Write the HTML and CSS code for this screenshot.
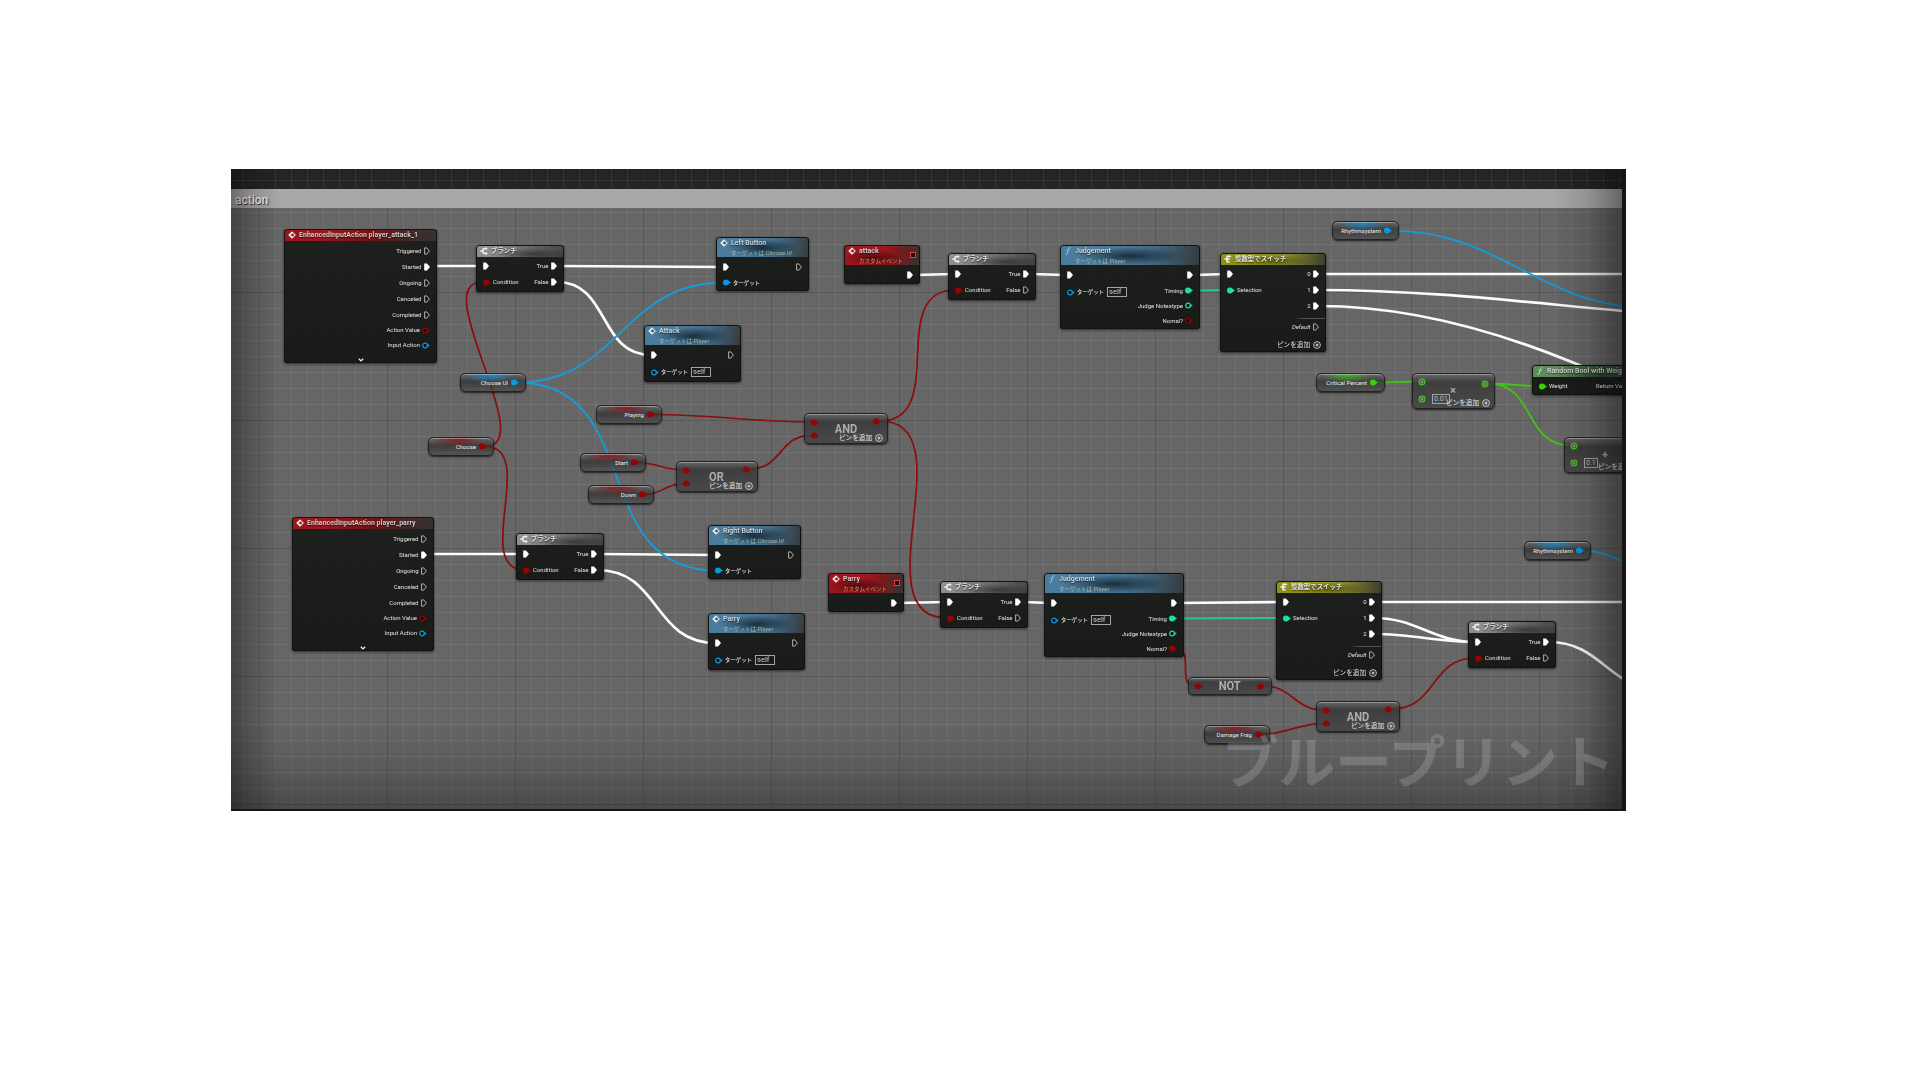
FILE: index.html
```html
<!DOCTYPE html>
<html lang="ja">
<head>
<meta charset="utf-8">
<title>Blueprint graph</title>
<link rel="stylesheet" href="styles.css">
</head>
<body>
<svg class="defs" aria-hidden="true">
  <symbol id="exec-on" viewBox="0 0 6 8"><path d="M.2 .5H3L6 4 3 7.5H.2z" fill="#fff"/></symbol>
  <symbol id="exec-off" viewBox="0 0 6 8"><path d="M.6 .9H2.8L5.4 4 2.8 7.1H.6z" fill="none" stroke="#d4d4d4" stroke-width=".8"/></symbol>
  <symbol id="data-on" viewBox="0 0 8 7"><circle cx="3" cy="3.5" r="3" fill="currentColor"/><path d="M5 1.6L8 3.5 5 5.4z" fill="currentColor"/></symbol>
  <symbol id="data-off" viewBox="0 0 8 7"><circle cx="3" cy="3.5" r="2.3" fill="#0b0d0c" stroke="currentColor" stroke-width="1.3"/><path d="M5.6 2L7.8 3.5 5.6 5z" fill="currentColor"/></symbol>
  <symbol id="wild" viewBox="0 0 8 8"><circle cx="4" cy="4" r="2.9" fill="#8a8a8a" stroke="currentColor" stroke-width="1.1"/><circle cx="4" cy="4" r="1.9" fill="none" stroke="#3a4a35" stroke-width=".7"/></symbol>
  <symbol id="i-event" viewBox="0 0 8 8"><path d="M4 .2L7.8 4 4 7.8 .2 4z" fill="#f0f0f0"/><path d="M4.4 2L6.4 4 4.4 6V4.8H2.8V3.2h1.6z" fill="currentColor"/></symbol>
  <symbol id="i-branch" viewBox="0 0 8 8"><path d="M.4 4H3M6.2 1.6H4.6Q3 1.6 3 3v2Q3 6.4 4.6 6.4H6.2" fill="none" stroke="#f2f2f2" stroke-width="1.5"/><path d="M5.6 0L7.8 1.6 5.6 3.2zM5.6 4.8L7.8 6.4 5.6 8z" fill="#f2f2f2"/></symbol>
  <symbol id="i-switch" viewBox="0 0 8 8"><path d="M.4 4H5M5.4 1.3H3V6.8H5.4" fill="none" stroke="#f2f2f2" stroke-width="1.4"/><path d="M5 0L7.6 1.4 5 2.8zM4.6 2.9L6.4 4 4.6 5.1z" fill="#f2f2f2"/></symbol>
  <symbol id="i-func" viewBox="0 0 8 8"><path d="M6.6 .9Q4.9 .2 4.4 2.2L3.4 6Q3 7.8 1.4 7.1M2.6 3.2H5.8" fill="none" stroke="currentColor" stroke-width="1.1"/></symbol>
  <symbol id="i-add" viewBox="0 0 8 8"><circle cx="4" cy="4" r="3.4" fill="none" stroke="#d8d8d8" stroke-width=".9"/><path d="M4 2.4V5.6M2.4 4H5.6" stroke="#d8d8d8" stroke-width="1.2"/></symbol>
  <symbol id="i-down" viewBox="0 0 6 4"><path d="M.8 .7L3 2.9 5.2 .7" fill="none" stroke="#eee" stroke-width="1.3"/></symbol>
</svg>

<main class="graph">
  <div class="comment">
    <h1 class="comment-title">action</h1>
    <div class="comment-body"></div>
  </div>
  <div class="grid"></div>

  <svg class="wires" viewBox="231 169 1391 640">
    <g class="w-exec">
      <path d="M430 266H482M557 266L725 267M430 554H522M597 554L716 555M913 275L955 274M897 603L947 602M1030 274L1067 275M1022 602L1051 603M1193 275L1227 274M1177 603L1283 602M1319 274H1626M1375 602H1626"/>
      <path d="M557 282C610 282 598 355 651 355M597 570C661 570 652 643 716 643"/>
      <path d="M1319 290C1489 290 1630 320 1800 320M1319 306C1400 306 1500 327 1622 384"/>
      <path d="M1375 618C1416 618 1434 642 1475 642M1375 634C1411 634 1439 642 1475 642M1549 642C1602 642 1609 690 1662 690"/>
    </g>
    <g class="w-bool">
      <path d="M485 446.500C540 446.500 427 282 482 282M485 446.500C539 446.500 471 570 525 570"/>
      <path d="M653 414.500C708 414.500 756 422 811 422M637 462.500C655 462.500 665 470 683 470M645 494.500C661 494.500 667 483.300 683 483.300M750 469C782 469 779 435.300 811 435.300"/>
      <path d="M880 421C949 421 886 290 955 290M880 421C968 421 859 618 947 618"/>
      <path d="M1176 648.500C1195 648.500 1176 686 1195 686M1264 686C1292 686 1295 710 1323 710M1261 734.500C1285 734.500 1299 723.300 1323 723.300M1392 709C1437 709 1430 658 1475 658"/>
    </g>
    <g class="w-object">
      <path d="M517 382.500C619 382.500 622 282.500 724 282.500M517 382.500C646 382.500 587 570.500 716 570.500M1390 230.600C1503 230.600 1539 308 1652 308M1582 550.600C1600 550.600 1610 556 1622 561"/>
    </g>
    <g class="w-enum"><path d="M1192 290.700L1227 290M1176 618.600L1283 618"/></g>
    <g class="w-float"><path d="M1376 382.700L1419 381.500M1488 383.500C1505 383.500 1521 386 1538 386M1488 383.500C1536 383.500 1523 445.500 1571 445.500"/></g>
  </svg>

  <section class="node eia-attack">
    <header class="head red"><svg class="icon"><use href="#i-event"/></svg><h2 class="title">EnhancedInputAction player_attack_1</h2></header>
    <div class="body"><ul class="outs">
      <li>Triggered<svg class="exec"><use href="#exec-off"/></svg></li>
      <li>Started<svg class="exec"><use href="#exec-on"/></svg></li>
      <li>Ongoing<svg class="exec"><use href="#exec-off"/></svg></li>
      <li>Canceled<svg class="exec"><use href="#exec-off"/></svg></li>
      <li>Completed<svg class="exec"><use href="#exec-off"/></svg></li>
      <li class="r15">Action Value<svg class="data bool"><use href="#data-off"/></svg></li>
      <li class="r15">Input Action<svg class="data object"><use href="#data-off"/></svg></li>
    </ul></div>
    <svg class="expand"><use href="#i-down"/></svg>
  </section>

  <section class="node eia-parry">
    <header class="head red"><svg class="icon"><use href="#i-event"/></svg><h2 class="title">EnhancedInputAction player_parry</h2></header>
    <div class="body"><ul class="outs">
      <li>Triggered<svg class="exec"><use href="#exec-off"/></svg></li>
      <li>Started<svg class="exec"><use href="#exec-on"/></svg></li>
      <li>Ongoing<svg class="exec"><use href="#exec-off"/></svg></li>
      <li>Canceled<svg class="exec"><use href="#exec-off"/></svg></li>
      <li>Completed<svg class="exec"><use href="#exec-off"/></svg></li>
      <li class="r15">Action Value<svg class="data bool"><use href="#data-off"/></svg></li>
      <li class="r15">Input Action<svg class="data object"><use href="#data-off"/></svg></li>
    </ul></div>
    <svg class="expand"><use href="#i-down"/></svg>
  </section>

  <section class="node branch branch-a">
    <header class="head gray"><svg class="icon"><use href="#i-branch"/></svg><h2 class="title jp">ブランチ</h2></header>
    <div class="body">
      <ul class="ins"><li><svg class="exec"><use href="#exec-on"/></svg></li><li><svg class="data bool"><use href="#data-on"/></svg>Condition</li></ul>
      <ul class="outs"><li>True<svg class="exec"><use href="#exec-on"/></svg></li><li>False<svg class="exec"><use href="#exec-on"/></svg></li></ul>
    </div>
  </section>
  <section class="node branch branch-b">
    <header class="head gray"><svg class="icon"><use href="#i-branch"/></svg><h2 class="title jp">ブランチ</h2></header>
    <div class="body">
      <ul class="ins"><li><svg class="exec"><use href="#exec-on"/></svg></li><li><svg class="data bool"><use href="#data-on"/></svg>Condition</li></ul>
      <ul class="outs"><li>True<svg class="exec"><use href="#exec-on"/></svg></li><li>False<svg class="exec"><use href="#exec-off"/></svg></li></ul>
    </div>
  </section>
  <section class="node branch branch-c">
    <header class="head gray"><svg class="icon"><use href="#i-branch"/></svg><h2 class="title jp">ブランチ</h2></header>
    <div class="body">
      <ul class="ins"><li><svg class="exec"><use href="#exec-on"/></svg></li><li><svg class="data bool"><use href="#data-on"/></svg>Condition</li></ul>
      <ul class="outs"><li>True<svg class="exec"><use href="#exec-on"/></svg></li><li>False<svg class="exec"><use href="#exec-on"/></svg></li></ul>
    </div>
  </section>
  <section class="node branch branch-d">
    <header class="head gray"><svg class="icon"><use href="#i-branch"/></svg><h2 class="title jp">ブランチ</h2></header>
    <div class="body">
      <ul class="ins"><li><svg class="exec"><use href="#exec-on"/></svg></li><li><svg class="data bool"><use href="#data-on"/></svg>Condition</li></ul>
      <ul class="outs"><li>True<svg class="exec"><use href="#exec-on"/></svg></li><li>False<svg class="exec"><use href="#exec-off"/></svg></li></ul>
    </div>
  </section>
  <section class="node branch branch-e">
    <header class="head gray"><svg class="icon"><use href="#i-branch"/></svg><h2 class="title jp">ブランチ</h2></header>
    <div class="body">
      <ul class="ins"><li><svg class="exec"><use href="#exec-on"/></svg></li><li><svg class="data bool"><use href="#data-on"/></svg>Condition</li></ul>
      <ul class="outs"><li>True<svg class="exec"><use href="#exec-on"/></svg></li><li>False<svg class="exec"><use href="#exec-off"/></svg></li></ul>
    </div>
  </section>

  <section class="node call left-button">
    <header class="head tall blue"><svg class="icon"><use href="#i-event"/></svg><div><h2 class="title">Left Button</h2><p class="sub">ターゲットは <i>Choose UI</i></p></div></header>
    <div class="body">
      <ul class="ins"><li><svg class="exec"><use href="#exec-on"/></svg></li><li class="r15 jp"><svg class="data object"><use href="#data-on"/></svg>ターゲット</li></ul>
      <ul class="outs"><li><svg class="exec"><use href="#exec-off"/></svg></li></ul>
    </div>
  </section>
  <section class="node call right-button">
    <header class="head tall blue"><svg class="icon"><use href="#i-event"/></svg><div><h2 class="title">Right Button</h2><p class="sub">ターゲットは <i>Choose UI</i></p></div></header>
    <div class="body">
      <ul class="ins"><li><svg class="exec"><use href="#exec-on"/></svg></li><li class="r15 jp"><svg class="data object"><use href="#data-on"/></svg>ターゲット</li></ul>
      <ul class="outs"><li><svg class="exec"><use href="#exec-off"/></svg></li></ul>
    </div>
  </section>
  <section class="node call call-attack">
    <header class="head tall blue"><svg class="icon"><use href="#i-event"/></svg><div><h2 class="title">Attack</h2><p class="sub">ターゲットは <i>Player</i></p></div></header>
    <div class="body">
      <ul class="ins"><li><svg class="exec"><use href="#exec-on"/></svg></li><li class="r18 jp"><svg class="data object"><use href="#data-off"/></svg>ターゲット<span class="field self">self</span></li></ul>
      <ul class="outs"><li><svg class="exec"><use href="#exec-off"/></svg></li></ul>
    </div>
  </section>
  <section class="node call call-parry">
    <header class="head tall blue"><svg class="icon"><use href="#i-event"/></svg><div><h2 class="title">Parry</h2><p class="sub">ターゲットは <i>Player</i></p></div></header>
    <div class="body">
      <ul class="ins"><li><svg class="exec"><use href="#exec-on"/></svg></li><li class="r18 jp"><svg class="data object"><use href="#data-off"/></svg>ターゲット<span class="field self">self</span></li></ul>
      <ul class="outs"><li><svg class="exec"><use href="#exec-off"/></svg></li></ul>
    </div>
  </section>

  <section class="node event event-attack">
    <header class="head tall red"><svg class="icon"><use href="#i-event"/></svg><div><h2 class="title">attack</h2><p class="sub warm">カスタムイベント</p></div><span class="delegate"></span></header>
    <div class="body"><ul class="outs"><li><svg class="exec"><use href="#exec-on"/></svg></li></ul></div>
  </section>
  <section class="node event event-parry">
    <header class="head tall red"><svg class="icon"><use href="#i-event"/></svg><div><h2 class="title">Parry</h2><p class="sub warm">カスタムイベント</p></div><span class="delegate"></span></header>
    <div class="body"><ul class="outs"><li><svg class="exec"><use href="#exec-on"/></svg></li></ul></div>
  </section>

  <section class="node judge judge-a">
    <header class="head tall blue"><svg class="icon fn"><use href="#i-func"/></svg><div><h2 class="title">Judgement</h2><p class="sub">ターゲットは <i>Player</i></p></div></header>
    <div class="body">
      <ul class="ins"><li><svg class="exec"><use href="#exec-on"/></svg></li><li class="r18 jp"><svg class="data object"><use href="#data-off"/></svg>ターゲット<span class="field self">self</span></li></ul>
      <ul class="outs"><li><svg class="exec"><use href="#exec-on"/></svg></li><li class="r15">Timing<svg class="data enum"><use href="#data-on"/></svg></li><li class="r15">Judge Notestype<svg class="data enum"><use href="#data-off"/></svg></li><li class="r15">Nomal?<svg class="data bool"><use href="#data-off"/></svg></li></ul>
    </div>
  </section>
  <section class="node judge judge-b">
    <header class="head tall blue"><svg class="icon fn"><use href="#i-func"/></svg><div><h2 class="title">Judgement</h2><p class="sub">ターゲットは <i>Player</i></p></div></header>
    <div class="body">
      <ul class="ins"><li><svg class="exec"><use href="#exec-on"/></svg></li><li class="r18 jp"><svg class="data object"><use href="#data-off"/></svg>ターゲット<span class="field self">self</span></li></ul>
      <ul class="outs"><li><svg class="exec"><use href="#exec-on"/></svg></li><li class="r15">Timing<svg class="data enum"><use href="#data-on"/></svg></li><li class="r15">Judge Notestype<svg class="data enum"><use href="#data-off"/></svg></li><li class="r15">Nomal?<svg class="data bool"><use href="#data-on"/></svg></li></ul>
    </div>
  </section>

  <section class="node switch switch-a">
    <header class="head yellow"><svg class="icon"><use href="#i-switch"/></svg><h2 class="title jp">整数型でスイッチ</h2></header>
    <div class="body">
      <ul class="ins"><li><svg class="exec"><use href="#exec-on"/></svg></li><li><svg class="data enum"><use href="#data-on"/></svg>Selection</li></ul>
      <ul class="outs"><li>0<svg class="exec"><use href="#exec-on"/></svg></li><li>1<svg class="exec"><use href="#exec-on"/></svg></li><li>2<svg class="exec"><use href="#exec-on"/></svg></li><li class="default"><i>Default</i><svg class="exec"><use href="#exec-off"/></svg></li><li class="add">ピンを追加<svg class="plus"><use href="#i-add"/></svg></li></ul>
    </div>
  </section>
  <section class="node switch switch-b">
    <header class="head yellow"><svg class="icon"><use href="#i-switch"/></svg><h2 class="title jp">整数型でスイッチ</h2></header>
    <div class="body">
      <ul class="ins"><li><svg class="exec"><use href="#exec-on"/></svg></li><li><svg class="data enum"><use href="#data-on"/></svg>Selection</li></ul>
      <ul class="outs"><li>0<svg class="exec"><use href="#exec-on"/></svg></li><li>1<svg class="exec"><use href="#exec-on"/></svg></li><li>2<svg class="exec"><use href="#exec-on"/></svg></li><li class="default"><i>Default</i><svg class="exec"><use href="#exec-off"/></svg></li><li class="add">ピンを追加<svg class="plus"><use href="#i-add"/></svg></li></ul>
    </div>
  </section>

  <section class="node random">
    <header class="head green"><svg class="icon fn"><use href="#i-func"/></svg><h2 class="title">Random Bool with Weight</h2></header>
    <div class="body">
      <ul class="ins"><li><svg class="data float"><use href="#data-on"/></svg>Weight</li></ul>
      <ul class="outs"><li>Return Value<svg class="data bool"><use href="#data-off"/></svg></li></ul>
    </div>
  </section>

  <div class="pill object v-chooseui"><span>Choose UI</span><svg class="data"><use href="#data-on"/></svg></div>
  <div class="pill bool v-choose"><span>Choose</span><svg class="data"><use href="#data-on"/></svg></div>
  <div class="pill bool v-playing"><span>Playing</span><svg class="data"><use href="#data-on"/></svg></div>
  <div class="pill bool v-start"><span>Start</span><svg class="data"><use href="#data-on"/></svg></div>
  <div class="pill bool v-down"><span>Down</span><svg class="data"><use href="#data-on"/></svg></div>
  <div class="pill bool v-damage"><span>Damage Frag</span><svg class="data"><use href="#data-on"/></svg></div>
  <div class="pill object v-rhythm-a"><span>Rhythmsystem</span><svg class="data"><use href="#data-on"/></svg></div>
  <div class="pill object v-rhythm-b"><span>Rhythmsystem</span><svg class="data"><use href="#data-on"/></svg></div>
  <div class="pill float v-critical"><span>Critical Percent</span><svg class="data"><use href="#data-on"/></svg></div>

  <div class="op bool op-or">
    <div class="op-pins"><svg class="data"><use href="#data-on"/></svg><svg class="data"><use href="#data-on"/></svg></div>
    <b class="op-name">OR</b>
    <div class="op-pins"><svg class="data"><use href="#data-on"/></svg></div>
    <div class="add">ピンを追加<svg class="plus"><use href="#i-add"/></svg></div>
  </div>
  <div class="op bool op-and-a">
    <div class="op-pins"><svg class="data"><use href="#data-on"/></svg><svg class="data"><use href="#data-on"/></svg></div>
    <b class="op-name">AND</b>
    <div class="op-pins"><svg class="data"><use href="#data-on"/></svg></div>
    <div class="add">ピンを追加<svg class="plus"><use href="#i-add"/></svg></div>
  </div>
  <div class="op bool op-and-b">
    <div class="op-pins"><svg class="data"><use href="#data-on"/></svg><svg class="data"><use href="#data-on"/></svg></div>
    <b class="op-name">AND</b>
    <div class="op-pins"><svg class="data"><use href="#data-on"/></svg></div>
    <div class="add">ピンを追加<svg class="plus"><use href="#i-add"/></svg></div>
  </div>
  <div class="op bool op-not">
    <div class="op-pins"><svg class="data"><use href="#data-on"/></svg></div>
    <b class="op-name">NOT</b>
    <div class="op-pins"><svg class="data"><use href="#data-on"/></svg></div>
  </div>
  <div class="op math float op-mul">
    <div class="op-pins"><svg class="wild"><use href="#wild"/></svg><div class="op-row"><svg class="wild"><use href="#wild"/></svg><span class="field num">0.01</span></div></div>
    <b class="op-name">×</b>
    <div class="op-pins"><svg class="wild"><use href="#wild"/></svg></div>
    <div class="add">ピンを追加<svg class="plus"><use href="#i-add"/></svg></div>
  </div>
  <div class="op math float op-sum">
    <div class="op-pins"><svg class="wild"><use href="#wild"/></svg><div class="op-row"><svg class="wild"><use href="#wild"/></svg><span class="field num">0.1</span></div></div>
    <b class="op-name">+</b>
    <div class="op-pins"><svg class="wild"><use href="#wild"/></svg></div>
    <div class="add">ピンを追加<svg class="plus"><use href="#i-add"/></svg></div>
  </div>

  <div class="vignette"></div>
  <div class="watermark">ブループリント</div>
</main>
</body>
</html>
```

FILE: styles.css
```css
* { box-sizing: border-box; }
body { margin: 0; padding: 169px 0 0 231px; background: #fff; font-family: Roboto, "Noto Sans CJK JP", sans-serif; }
h1, h2, p, ul { margin: 0; padding: 0; list-style: none; }
.defs { position: absolute; width: 0; height: 0; }

.graph { position: relative; width: 1395px; height: 642px; overflow: hidden; background: #242424; border-right: 4px solid #151412; border-bottom: 2px solid #151515; }
.comment { display: flex; flex-direction: column; height: 100%; padding-top: 20px; }
.comment-title { height: 19px; padding-left: 4px; background: #a8a8a8; color: #eee; font-size: 12px; font-weight: 500; line-height: 22px; text-shadow: 1px 1px 1px #333; }
.comment-body { flex: 1; background: #666; }

/* 16px minor cells, 128px major cells */
.grid { position: absolute; inset: 0;
  background:
    linear-gradient(90deg, rgba(0,0,0,.22) 1px, transparent 1px) 28px 0 / 128px 100%,
    linear-gradient(rgba(0,0,0,.22) 1px, transparent 1px) 0 123px / 100% 128px,
    linear-gradient(90deg, rgba(255,255,255,.075) 1px, transparent 1px) 12px 0 / 16px 100%,
    linear-gradient(rgba(255,255,255,.075) 1px, transparent 1px) 0 11px / 100% 16px;
  clip-path: path("M0 0H1391V20H0ZM0 39H1391V640H0Z"); }

.wires { position: absolute; left: 0; top: 0; width: 1391px; height: 640px; fill: none; }
.w-exec { stroke: #fbfbfb; stroke-width: 2.7; }
.w-bool { stroke: #8d0c0c; stroke-width: 1.7; }
.w-object { stroke: #159cdc; stroke-width: 1.8; }
.w-enum { stroke: #27c79c; stroke-width: 2; }
.w-float { stroke: #3fc416; stroke-width: 1.8; }

.bool { color: #950303; }
.object { color: #069ae8; }
.enum { color: #1fdcab; }
.float { color: #38d20c; }

.node { position: absolute; display: flex; flex-direction: column; border-radius: 3px; overflow: hidden; background: linear-gradient(rgba(30,32,30,.96), rgba(24,27,24,.96)); outline: 1px solid #111; outline-offset: -1px; filter: drop-shadow(0 1px 1.5px rgba(0,0,0,.6)); }
.head { flex: none; display: flex; gap: 3px; height: 12px; padding: 2px 4px 0; box-shadow: inset 0 2px 1px -1px rgba(255,255,255,.3); }
.head.tall { height: 20px; }
.head.red { color: #8e1518; background: linear-gradient(100deg, #9a161a 0 25%, #711 55%, #452727 80%, #333 100%); }
.head.tall.red { background: radial-gradient(ellipse at 40% 65%, rgba(40,5,8,.65), transparent 45%), linear-gradient(100deg, #9e161b 0 50%, #7a1a1c 70%, #333 100%); }
.head.gray { color: #888; background: radial-gradient(ellipse at 65% 75%, rgba(20,20,20,.5), transparent 45%), linear-gradient(100deg, #8e8e8e 0 15%, #666 60%, #444 100%); }
.head.blue { color: #335268; background: radial-gradient(ellipse at 50% 55%, rgba(10,24,34,.75), transparent 55%), linear-gradient(100deg, #4c7c9c 0 30%, #426a86 65%, #353a3d 100%); }
.head.yellow { color: #888b20; background: radial-gradient(ellipse at 50% 65%, rgba(40,42,0,.5), transparent 50%), linear-gradient(100deg, #8f9018 0 45%, #83842a 65%, #3a3a30 100%); }
.head.green { color: #3b5c3b; background: linear-gradient(100deg, #5d8b5c 0 20%, #2c472c 60%, #456545 100%); }
.icon { flex: none; width: 8px; height: 8px; }
.icon.fn { color: #6fc0ee; }
.green .icon.fn { color: #9ad59a; }
.title { color: #d2d5d5; font-size: 7px; font-weight: 600; line-height: 8px; letter-spacing: .03px; white-space: nowrap; text-shadow: 0 1px 1px rgba(0,0,0,.6); }
.title.jp { color: #e2e2e2; font-size: 6.4px; font-weight: 700; }
.sub { margin-top: 2px; color: #a3b8a0; font-size: 5.5px; line-height: 8px; white-space: nowrap; }
.sub i { font-size: 6px; }
.sub.warm { color: #d09a68; }
.delegate { width: 6px; height: 6px; margin: 5px 0 0 auto; border: 1.5px solid #f33636; background: #240808; }

.body { display: flex; justify-content: space-between; padding: 1px 7px 0; }
.tall + .body { padding-top: 2px; }
.outs { margin-left: auto; }
.ins li, .outs li { display: flex; align-items: center; gap: 2px; height: 16px; color: #e2e2e2; font-size: 6px; line-height: 8px; white-space: nowrap; }
.outs li { justify-content: flex-end; }
.ins .jp { font-size: 5.4px; font-weight: 500; }
.ins .r15, .outs .r15 { height: 15px; }
.ins .r18, .outs .r18 { height: 18px; }
.exec { flex: none; width: 6px; height: 8px; }
.outs .exec { margin-left: .5px; }
.data { flex: none; width: 8px; height: 7px; }
.wild { flex: none; width: 8px; height: 8px; }
.field { border: 1px solid #a5a5a5; color: #ccc; line-height: 7px; }
.self { width: 20px; height: 10px; margin-left: 1px; padding-left: 1px; font-size: 7.6px; font-weight: 400; }
.expand { width: 6px; height: 4px; margin: 5px auto 0; }
.add { display: flex; align-items: center; gap: 3px; color: #ececec; font-size: 6.6px; line-height: 8px; white-space: nowrap; }
.plus { flex: none; width: 8px; height: 8px; }
.switch .default { position: relative; margin-top: 5px; }
.switch .default::before { content: ""; position: absolute; right: -6px; top: -1px; width: 31px; height: 1px; background: linear-gradient(90deg, transparent, #565656 30%); }
.switch li.add { height: 14px; margin: 3px -2px 0 0; gap: 3px; font-size: 6.6px; }

.eia-attack { left: 53px; top: 60px; width: 153px; height: 134px; }
.eia-parry { left: 61px; top: 348px; width: 142px; height: 134px; }
.eia-attack .body, .eia-parry .body { padding-top: 1.5px; }
.branch { width: 88px; height: 47px; }
.branch-a { left: 245px; top: 76px; }
.branch-b { left: 717px; top: 84px; }
.branch-c { left: 285px; top: 364px; }
.branch-d { left: 709px; top: 412px; }
.branch-e { left: 1237px; top: 452px; }
.left-button { left: 485px; top: 68px; width: 93px; height: 54px; }
.right-button { left: 477px; top: 356px; width: 93px; height: 54px; }
.call-attack { left: 413px; top: 156px; width: 97px; height: 57px; }
.call-parry { left: 477px; top: 444px; width: 97px; height: 57px; }
.event { width: 76px; height: 39px; }
.event-attack { left: 613px; top: 76px; }
.event-parry { left: 597px; top: 404px; }
.judge { width: 140px; height: 84px; }
.judge-a { left: 829px; top: 76px; }
.judge-b { left: 813px; top: 404px; }
.switch { width: 106px; height: 99px; }
.switch-a { left: 989px; top: 84px; }
.switch-b { left: 1045px; top: 412px; }
.random { left: 1301px; top: 196px; width: 115px; height: 30px; background: rgba(24,27,24,.9); }

.pill { position: absolute; display: flex; align-items: center; justify-content: flex-end; gap: 3px; width: 66px; height: 19px; padding: 0 7px 0 0; border: 1px solid #222; border-radius: 6px; font-size: 6px; white-space: nowrap;
  background: radial-gradient(ellipse 26px 9px at 45% 0, color-mix(in srgb, currentColor 75%, transparent), transparent), linear-gradient(#666c, #333c 45%, #4449);
  box-shadow: inset 0 1px 0 rgba(210,210,210,.5), 0 1px 2px rgba(0,0,0,.7); }
.pill span { color: #eee; }
.pill .data { margin-right: -1px; }
.v-chooseui { left: 229px; top: 204px; }
.v-choose { left: 197px; top: 268px; }
.v-playing { left: 365px; top: 236px; }
.v-start { left: 349px; top: 284px; }
.v-down { left: 357px; top: 316px; }
.v-damage { left: 973px; top: 556px; }
.v-rhythm-a { left: 1101px; top: 52px; width: 67px; }
.v-rhythm-b { left: 1293px; top: 372px; width: 67px; }
.v-critical { left: 1085px; top: 204px; width: 69px; }

.op { position: absolute; display: flex; justify-content: space-between; width: 84px; height: 31px; padding: 1px 6px 0; border: 1px solid #222; border-radius: 5px; background: linear-gradient(#666d, #3a3a3ae6 25%, #444d); box-shadow: inset 0 1px 0 rgba(200,200,200,.5), 0 1px 2px rgba(0,0,0,.7); }
.op-pins { display: flex; flex-direction: column; gap: 6.3px; padding-top: 3.7px; }
.op-pins + .op-name { align-self: flex-start; margin-top: 7px; }
.op-name { color: #acacac; font-size: 12.8px; font-weight: 700; line-height: 14px; transform: scaleX(.87); }
.op .op-name ~ .op-pins { padding-top: 2.7px; }
.op .add { position: absolute; right: 4px; bottom: 1px; }
.op-or { left: 445px; top: 292px; width: 82px; }
.op-and-a { left: 573px; top: 244px; }
.op-and-b { left: 1085px; top: 532px; }
.op-not { left: 957px; top: 508px; height: 18px; }
.op-not .op-pins, .op-not .op-name ~ .op-pins { padding-top: 4px; }
.op-not .op-name { margin-top: 0; }
.math { height: 36px; padding: 0 5px; }
.math .op-pins { gap: 9px; padding-top: 3.5px; }
.math .op-name ~ .op-pins { padding-top: 5.5px; }
.math .op-name { position: absolute; left: 37px; top: 3px; font-size: 11px; transform: none; }
.op-row { display: flex; align-items: center; gap: 6px; height: 8px; }
.num { height: 10px; padding: 0 1px; color: #bbb; font-size: 7px; line-height: 8px; }
.op-mul { left: 1181px; top: 204px; width: 83px; }
.op-sum { left: 1333px; top: 268px; width: 83px; }

.vignette { position: absolute; inset: 0;
  background:
    linear-gradient(90deg, rgba(0,0,0,.36), rgba(0,0,0,.14) 24px, transparent 50px),
    linear-gradient(270deg, rgba(0,0,0,.4), rgba(0,0,0,.12) 35px, transparent 70px),
    linear-gradient(0deg, rgba(0,0,0,.28), rgba(0,0,0,.1) 45px, transparent 90px); }
.watermark { position: absolute; left: 991px; top: 549px; color: rgba(255,255,255,.16); font-family: "Noto Sans CJK JP", sans-serif; font-size: 56.6px; font-weight: 700; line-height: 80px; white-space: nowrap; }
```
